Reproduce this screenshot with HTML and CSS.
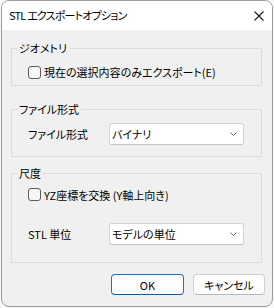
FILE: index.html
```html
<!DOCTYPE html>
<html lang="ja">

<head>
    <meta charset="UTF-8">
    <meta name="viewport" content="width=device-width, initial-scale=1.0">
    <title>STL エクスポートオプション</title>
    <link rel="stylesheet" href="styles.css">
</head>

<body>
    <div class="dialog">
        <div class="titlebar">
            <span class="title">STL エクスポートオプション</span>
            <svg class="close" width="10" height="10" viewBox="0 0 10 10">
                <path d="M0.5 0.5 L9.5 9.5 M9.5 0.5 L0.5 9.5" stroke="#1a1a1a" stroke-width="1.1" fill="none" />
            </svg>
        </div>
        <div class="content">
            <fieldset class="group geom">
                <legend>ジオメトリ</legend>
                <div class="group-body">
                    <label class="check"><input type="checkbox"><span>現在の選択内容のみエクスポート(E)</span></label>
                </div>
            </fieldset>

            <fieldset class="group format">
                <legend>ファイル形式</legend>
                <div class="group-body">
                    <div class="row">
                        <span class="row-label">ファイル形式</span>
                        <div class="combo"><span>バイナリ</span>
                            <svg width="7" height="4" viewBox="0 0 7 4"><path d="M0.5 0.5 L3.5 3.5 L6.5 0.5" stroke="#666" fill="none" /></svg>
                        </div>
                    </div>
                </div>
            </fieldset>

            <fieldset class="group scale">
                <legend>尺度</legend>
                <div class="group-body">
                    <label class="check"><input type="checkbox"><span>YZ座標を交換 (Y軸上向き)</span></label>
                    <div class="row unit-row">
                        <span class="row-label">STL 単位</span>
                        <div class="combo"><span>モデルの単位</span>
                            <svg width="7" height="4" viewBox="0 0 7 4"><path d="M0.5 0.5 L3.5 3.5 L6.5 0.5" stroke="#666" fill="none" /></svg>
                        </div>
                    </div>
                </div>
            </fieldset>

            <div class="buttons">
                <button class="btn btn-default" type="button">OK</button>
                <button class="btn btn-cancel" type="button">キャンセル</button>
            </div>
        </div>
    </div>
</body>

</html>
```

FILE: styles.css
```css
* {
    margin: 0;
    padding: 0;
    box-sizing: border-box;
}

body {
    background: #f7f7f7;
    font-family: "Noto Sans CJK JP", "Noto Sans", sans-serif;
    font-size: 11px;
    font-feature-settings: "palt";
    color: #000;
}

.dialog {
    margin-left: 1px;
    width: 272px;
    height: 307px;
    border: 1px solid #9c9c9c;
    border-radius: 8px;
    background: #f0f0f0;
    overflow: hidden;
}

.titlebar {
    height: 29px;
    background: #fff;
    display: flex;
    align-items: center;
    justify-content: space-between;
    padding: 0 8px 0 7px;
}

.title {
    line-height: 29px;
    letter-spacing: -0.8px;
}

.close {
    display: block;
}

.content {
    padding: 10px 0 0 9px;
}

.group {
    width: 251px;
    border: 1px solid #dcdcdc;
    padding: 0 0 0 5px;
}

.group legend {
    padding: 0 2px;
    line-height: 16px;
}

.group-body {
    padding-left: 11px;
}

.geom .group-body {
    padding-top: 6px;
    padding-bottom: 3px;
}

.format {
    margin-top: 15px;
}

.format .group-body {
    padding-top: 6px;
    padding-bottom: 11px;
}

.scale {
    margin-top: 8px;
}

.scale .group-body {
    padding-top: 5px;
    padding-bottom: 17px;
}

.check {
    display: flex;
    align-items: center;
    height: 20px;
}

.scale .check {
    height: 17px;
}

.check input {
    appearance: none;
    width: 13px;
    height: 13px;
    border: 1px solid #5c5c5c;
    border-radius: 3px;
    background: #f7f7f7;
    margin-right: 3px;
}

.row {
    display: flex;
    align-items: center;
}

.unit-row {
    margin-top: 20px;
}

.row-label {
    width: 81px;
}

.combo {
    width: 135px;
    height: 22px;
    background: #fff;
    border: 1px solid #d4d4d4;
    border-bottom-color: #c4c4c4;
    border-radius: 3px;
    display: flex;
    align-items: center;
    justify-content: space-between;
    padding: 0 6px 0 2px;
}

.combo svg {
    display: block;
}

.buttons {
    display: flex;
    justify-content: flex-end;
    gap: 9px;
    margin-top: 11px;
    padding-right: 7px;
}

.btn {
    height: 21px;
    background: #fdfdfd;
    border: 1px solid #d0d0d0;
    border-bottom-color: #b8b8b8;
    border-radius: 4px;
    font-family: inherit;
    font-size: 11px;
    font-feature-settings: "palt";
    color: #000;
}

.btn-default {
    width: 73px;
    border-color: #1a73c8;
    border-bottom-color: #0a5aa8;
}

.btn-cancel {
    width: 72px;
}
```
